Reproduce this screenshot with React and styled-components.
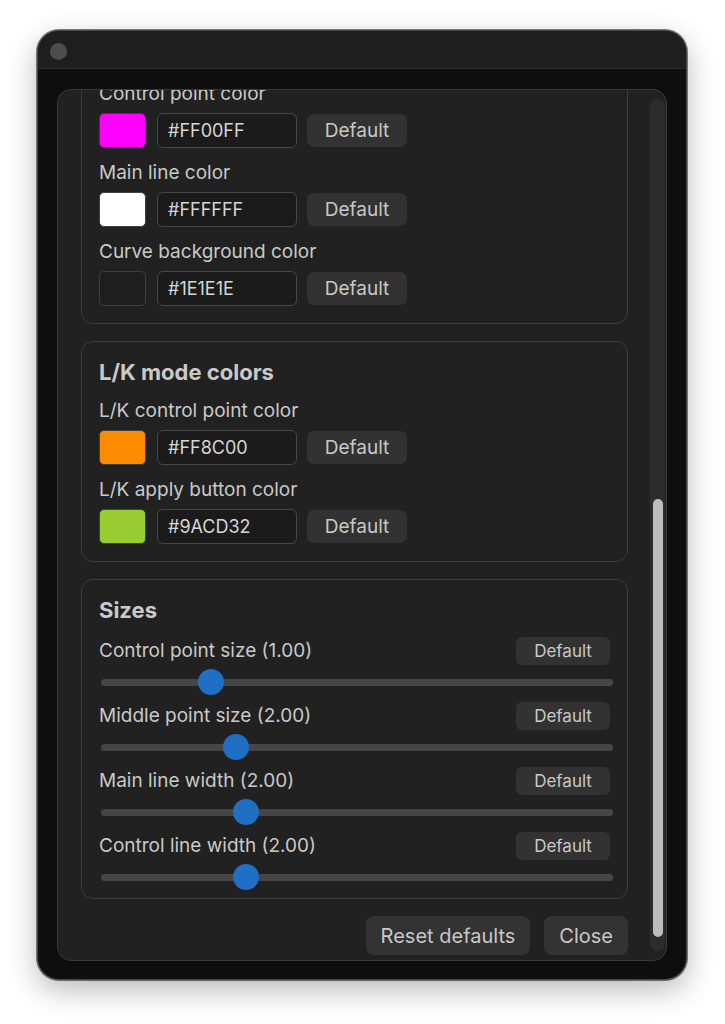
import React from "react";
import styled, { createGlobalStyle } from "styled-components";

const GlobalStyle = createGlobalStyle`
  html, body {
    margin: 0;
    padding: 0;
    background: #ffffff;
    font-family: Inter, "Noto Sans", "Liberation Sans", sans-serif;
  }
`;

const colorFields = [
  { label: "Control point color", value: "#FF00FF" },
  { label: "Main line color", value: "#FFFFFF" },
  { label: "Curve background color", value: "#1E1E1E" },
];

const lkFields = [
  { label: "L/K control point color", value: "#FF8C00" },
  { label: "L/K apply button color", value: "#9ACD32" },
];

// thumb position is a percentage of the track width
const sizeFields = [
  { label: "Control point size (1.00)", pos: 21.4 },
  { label: "Middle point size (2.00)", pos: 26.3 },
  { label: "Main line width (2.00)", pos: 28.4 },
  { label: "Control line width (2.00)", pos: 28.4 },
];

const ColorField = ({ label, value }) => (
  <Field>
    <Label>{label}</Label>
    <ColorRow>
      <Swatch $color={value} />
      <HexInput defaultValue={value} />
      <DefaultButton>Default</DefaultButton>
    </ColorRow>
  </Field>
);

const SizeField = ({ label, pos }) => (
  <Field $gap={2}>
    <SizeHeader>
      <Label>{label}</Label>
      <SmallButton>Default</SmallButton>
    </SizeHeader>
    <Slider>
      <Track>
        <Thumb style={{ left: `${pos}%` }} />
      </Track>
    </Slider>
  </Field>
);

const App = () => {
  return (
    <>
      <GlobalStyle />
      <Page>
        <Window>
          <TitleBar>
            <Dot />
          </TitleBar>
          <Body>
            <Panel>
              <Viewport>
                <ScrollContent>
                  <Group>
                    <Title>Curve colors</Title>
                    {colorFields.map((f) => (
                      <ColorField key={f.label} {...f} />
                    ))}
                  </Group>
                  <Group>
                    <Title>L/K mode colors</Title>
                    {lkFields.map((f) => (
                      <ColorField key={f.label} {...f} />
                    ))}
                  </Group>
                  <Group $padBottom={6}>
                    <Title>Sizes</Title>
                    <SizeList>
                      {sizeFields.map((f) => (
                        <SizeField key={f.label} {...f} />
                      ))}
                    </SizeList>
                  </Group>
                  <Footer>
                    <FooterButton>Reset defaults</FooterButton>
                    <FooterButton>Close</FooterButton>
                  </Footer>
                </ScrollContent>
              </Viewport>
              <ScrollTrack>
                <ScrollThumb />
              </ScrollTrack>
            </Panel>
          </Body>
        </Window>
      </Page>
    </>
  );
};

const Page = styled.div`
  display: flex;
  justify-content: center;
  padding: 30px 1px 0 0;
  height: 1024px;
  box-sizing: border-box;
`;

const Window = styled.div`
  width: 650px;
  height: 950px;
  display: flex;
  flex-direction: column;
  background: #0e0e0e;
  border-radius: 22px;
  border: 1px solid #4a4a4a;
  box-sizing: border-box;
  overflow: hidden;
  box-shadow: 0 10px 30px rgba(0, 0, 0, 0.28), 0 0 0 1px rgba(0, 0, 0, 0.5);
`;

const TitleBar = styled.div`
  height: 38px;
  flex: none;
  display: flex;
  align-items: center;
  padding: 3px 0 0 12px;
  box-sizing: border-box;
  background: #1e1e1e;
  border-bottom: 1px solid #2c2c2c;
`;

const Dot = styled.div`
  width: 17px;
  height: 17px;
  border-radius: 50%;
  background: #4d4d4d;
`;

const Body = styled.div`
  flex: 1;
  min-height: 0;
  display: flex;
  padding: 20px 19px 18px 19px;
`;

const Panel = styled.div`
  flex: 1;
  display: flex;
  background: #212121;
  border: 1px solid #3a3a3a;
  border-radius: 14px;
  padding: 0 1px 0 23px;
  overflow: hidden;
`;

const Viewport = styled.div`
  flex: 1;
  min-width: 0;
  overflow: hidden;
  padding-right: 22px;
`;

const ScrollContent = styled.div`
  display: flex;
  flex-direction: column;
  gap: 17px;
  margin-top: -84px;
  padding-top: 18px;
`;

const Group = styled.div`
  display: flex;
  flex-direction: column;
  gap: 13px;
  border: 1px solid #3c3c3c;
  border-radius: 12px;
  padding: 16px 17px ${(p) => p.$padBottom ?? 17}px;
`;

const Title = styled.div`
  font-size: 22px;
  font-weight: 700;
  line-height: 28px;
  color: #c9c9c9;
`;

const Field = styled.div`
  display: flex;
  flex-direction: column;
  gap: ${(p) => p.$gap ?? 7}px;
`;

const Label = styled.div`
  font-size: 19px;
  line-height: 24px;
  color: #c9c9c9;
`;

const ColorRow = styled.div`
  display: flex;
  align-items: center;
  gap: 10px;
`;

const Swatch = styled.div`
  width: 47px;
  height: 35px;
  border-radius: 5px;
  box-sizing: border-box;
  border: 1px solid #3e3e3e;
  background: ${(p) => p.$color};
`;

const HexInput = styled.input`
  width: 140px;
  height: 35px;
  box-sizing: border-box;
  margin-left: 1px;
  padding: 0 10px;
  border: 1px solid #474747;
  border-radius: 6px;
  background: #1b1b1b;
  color: #d6d6d6;
  font-family: inherit;
  font-size: 18px;
  outline: none;
`;

const Button = styled.button`
  border: none;
  font-family: inherit;
  background: #323232;
  color: #c8c8c8;
  border-radius: 7px;
  padding: 0;
  cursor: pointer;
`;

const DefaultButton = styled(Button)`
  width: 100px;
  height: 33px;
  font-size: 19px;
`;

const SmallButton = styled(Button)`
  width: 94px;
  height: 28px;
  font-size: 17px;
  border-radius: 6px;
`;

const SizeList = styled.div`
  display: flex;
  flex-direction: column;
  gap: 5px;
`;

const SizeHeader = styled.div`
  display: flex;
  align-items: center;
  justify-content: space-between;
  height: 28px;
`;

const Slider = styled.div`
  height: 30px;
  display: flex;
  align-items: center;
  margin: 0 -3px 0 2px;
`;

const Track = styled.div`
  position: relative;
  flex: 1;
  height: 7px;
  border-radius: 4px;
  background: #464646;
`;

const Thumb = styled.div`
  position: absolute;
  top: 50%;
  width: 26px;
  height: 26px;
  border-radius: 50%;
  background: #1f6fc4;
  transform: translate(-50%, -50%);
`;

const Footer = styled.div`
  display: flex;
  justify-content: flex-end;
  gap: 14px;
  padding-bottom: 4px;
`;

const FooterButton = styled(Button)`
  height: 39px;
  padding: 0 15px;
  font-size: 20px;
  border-radius: 8px;
  background: #333333;
`;

const ScrollTrack = styled.div`
  width: 15px;
  flex: none;
  margin: 9px 0 9px;
  border-radius: 8px;
  background: #2c2c2c;
  display: flex;
  flex-direction: column;
  align-items: center;
  justify-content: flex-end;
  padding-bottom: 14px;
`;

const ScrollThumb = styled.div`
  width: 10px;
  height: 438px;
  border-radius: 5px;
  background: #bdbdbd;
`;

export default App;
